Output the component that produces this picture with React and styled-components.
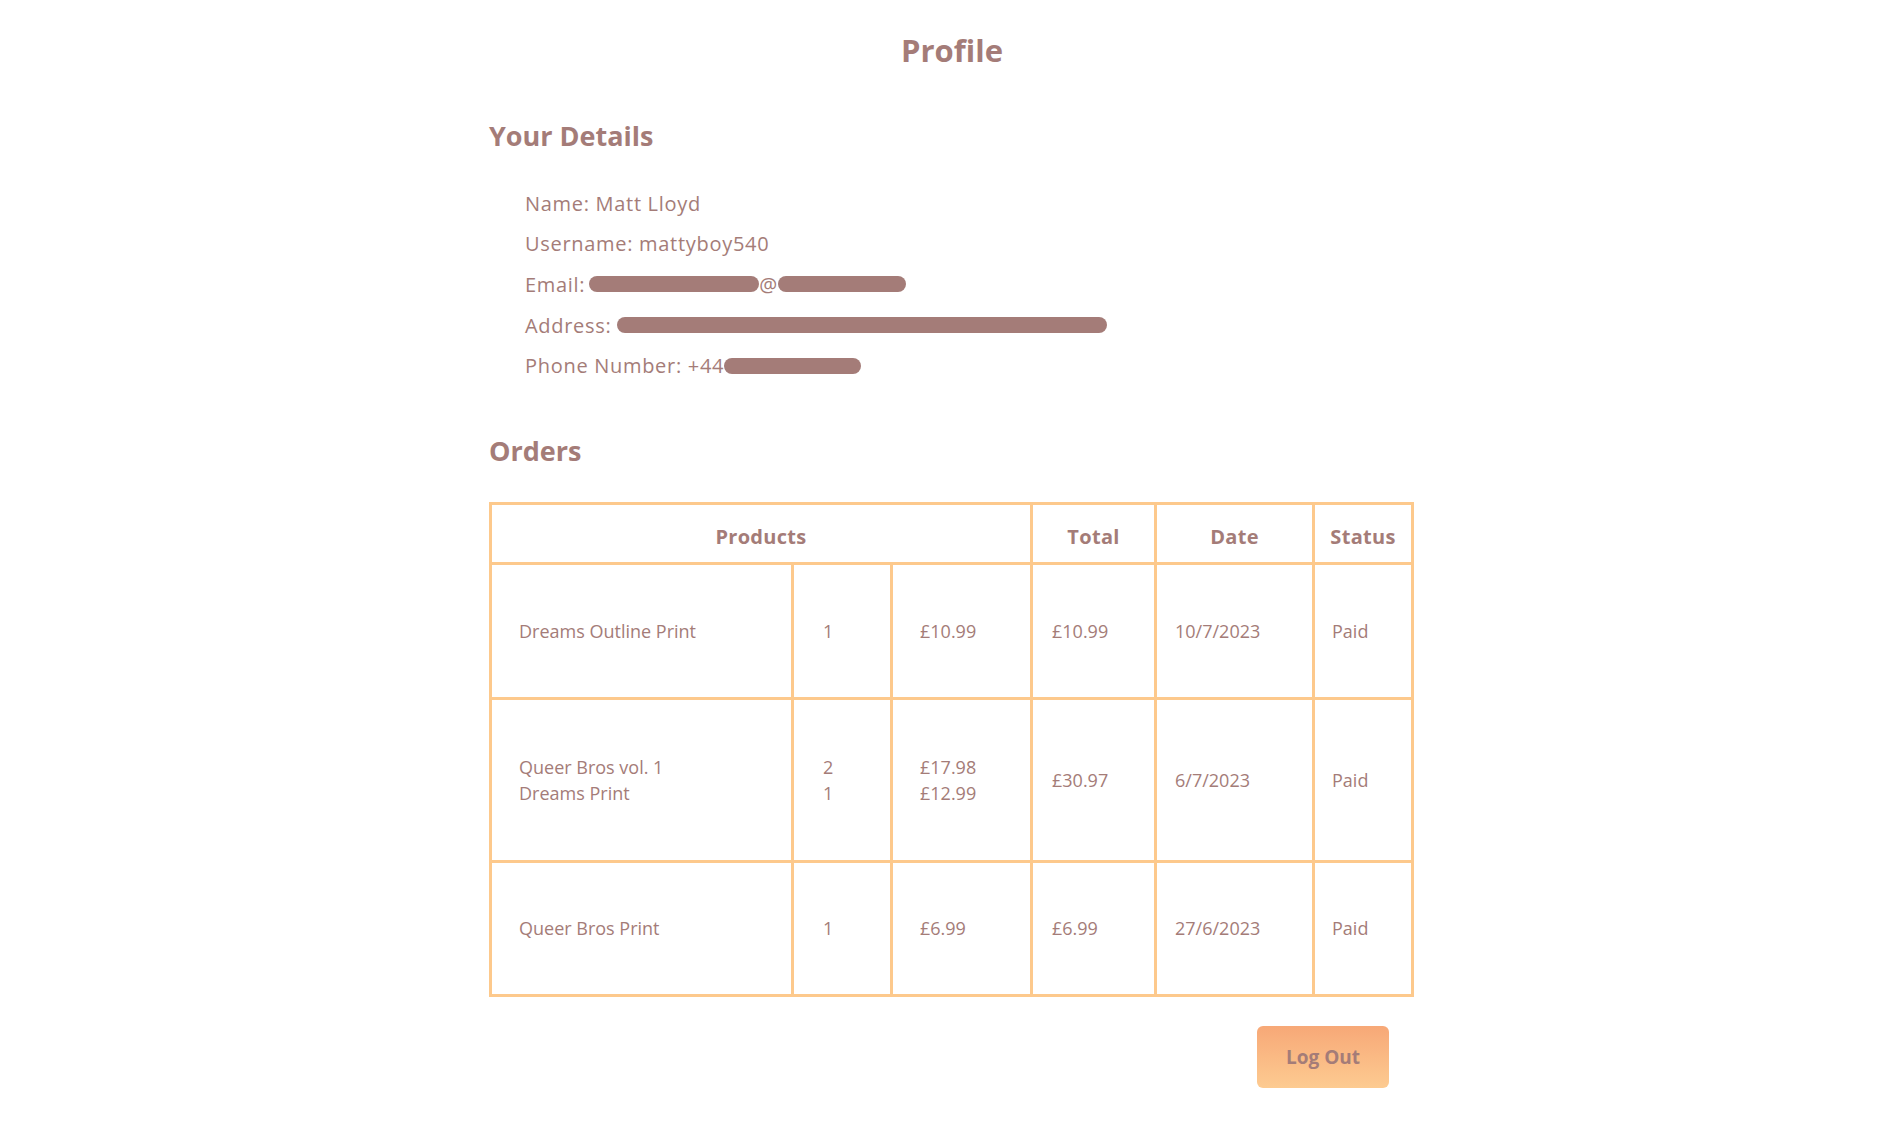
import React from "react";
import styled, { createGlobalStyle } from "styled-components";

const TEXT = "#a47c78";
const BORDER = "#fdc98c";

const GlobalStyle = createGlobalStyle`
  body {
    margin: 0;
    background: #ffffff;
    font-family: "Open Sans", "Liberation Sans", sans-serif;
    color: ${TEXT};
  }
`;

const Page = styled.div`
  width: 926px;
  margin: 0 auto;
  display: flex;
  flex-direction: column;
  padding-bottom: 34px;
`;

const Title = styled.h1`
  margin: 30px 0 0;
  font-size: 31px;
  line-height: 40px;
  font-weight: 700;
  text-align: center;
`;

const SectionTitle = styled.h2`
  margin: ${(p) => p.$top}px 0 0;
  font-size: 27px;
  line-height: 34px;
  font-weight: 700;
`;

const DetailsList = styled.ul`
  list-style: none;
  margin: 30px 0 0;
  padding: 0 0 0 36px;
`;

const DetailItem = styled.li`
  display: flex;
  align-items: center;
  height: 40.6px;
  font-size: 20px;
  letter-spacing: 0.7px;
  white-space: nowrap;
`;

const Redacted = styled.span`
  display: inline-block;
  width: ${(p) => p.$w}px;
  height: 16px;
  margin-left: ${(p) => p.$ml || 0}px;
  border-radius: 8px;
  background: ${TEXT};
`;

const Table = styled.table`
  margin-top: 34px;
  width: 922px;
  border-collapse: collapse;
  border: 3px solid ${BORDER};
  table-layout: fixed;
  font-family: "Open Sans", "Liberation Sans", sans-serif;
`;

const HeadCell = styled.th`
  border: 3px solid ${BORDER};
  height: 50px;
  padding: 7px 0 0;
  font-size: 20px;
  font-weight: 700;
  text-align: center;
  letter-spacing: 0.3px;
`;

const Cell = styled.td`
  border: 3px solid ${BORDER};
  padding: 0 0 0 ${(p) => p.$pl}px;
  height: ${(p) => p.$h}px;
  font-size: 18px;
  line-height: 26px;
  vertical-align: middle;
`;

const Footer = styled.div`
  display: flex;
  justify-content: flex-end;
  padding-right: 26px;
  margin-top: 29px;
`;

const LogOutButton = styled.button`
  width: 132px;
  height: 62px;
  border: none;
  border-radius: 6px;
  background: linear-gradient(180deg, #f7a877 0%, #fdcb91 100%);
  color: ${TEXT};
  font-family: "Open Sans", "Liberation Sans", sans-serif;
  font-size: 19px;
  font-weight: 700;
  cursor: pointer;
`;

const orders = [
  {
    items: [{ name: "Dreams Outline Print", qty: 1, price: "£10.99" }],
    total: "£10.99",
    date: "10/7/2023",
    h: 132,
  },
  {
    items: [
      { name: "Queer Bros vol. 1", qty: 2, price: "£17.98" },
      { name: "Dreams Print", qty: 1, price: "£12.99" },
    ],
    total: "£30.97",
    date: "6/7/2023",
    h: 160,
  },
  {
    items: [{ name: "Queer Bros Print", qty: 1, price: "£6.99" }],
    total: "£6.99",
    date: "27/6/2023",
    h: 131,
  },
];

const Lines = ({ values }) =>
  values.map((v, i) => <div key={i}>{v}</div>);

export default function App() {
  return (
    <>
      <GlobalStyle />
      <Page>
        <Title>Profile</Title>
        <SectionTitle $top={49}>Your Details</SectionTitle>
        <DetailsList>
          <DetailItem>Name: Matt Lloyd</DetailItem>
          <DetailItem>Username: mattyboy540</DetailItem>
          <DetailItem>
            Email:
            <Redacted $w={170} $ml={4} />@<Redacted $w={128} />
          </DetailItem>
          <DetailItem>
            Address:
            <Redacted $w={490} $ml={6} />
          </DetailItem>
          <DetailItem>
            Phone Number: +44
            <Redacted $w={137} />
          </DetailItem>
        </DetailsList>
        <SectionTitle $top={48}>Orders</SectionTitle>
        <Table>
          <colgroup>
            <col style={{ width: 302 }} />
            <col style={{ width: 99 }} />
            <col style={{ width: 140 }} />
            <col style={{ width: 124 }} />
            <col style={{ width: 158 }} />
            <col style={{ width: 99 }} />
          </colgroup>
          <thead>
            <tr>
              <HeadCell colSpan={3}>Products</HeadCell>
              <HeadCell>Total</HeadCell>
              <HeadCell>Date</HeadCell>
              <HeadCell>Status</HeadCell>
            </tr>
          </thead>
          <tbody>
            {orders.map((o, i) => (
              <tr key={i}>
                <Cell $pl={27} $h={o.h}>
                  <Lines values={o.items.map((it) => it.name)} />
                </Cell>
                <Cell $pl={29} $h={o.h}>
                  <Lines values={o.items.map((it) => it.qty)} />
                </Cell>
                <Cell $pl={27} $h={o.h}>
                  <Lines values={o.items.map((it) => it.price)} />
                </Cell>
                <Cell $pl={19} $h={o.h}>{o.total}</Cell>
                <Cell $pl={18} $h={o.h}>{o.date}</Cell>
                <Cell $pl={17} $h={o.h}>Paid</Cell>
              </tr>
            ))}
          </tbody>
        </Table>
        <Footer>
          <LogOutButton>Log Out</LogOutButton>
        </Footer>
      </Page>
    </>
  );
}
